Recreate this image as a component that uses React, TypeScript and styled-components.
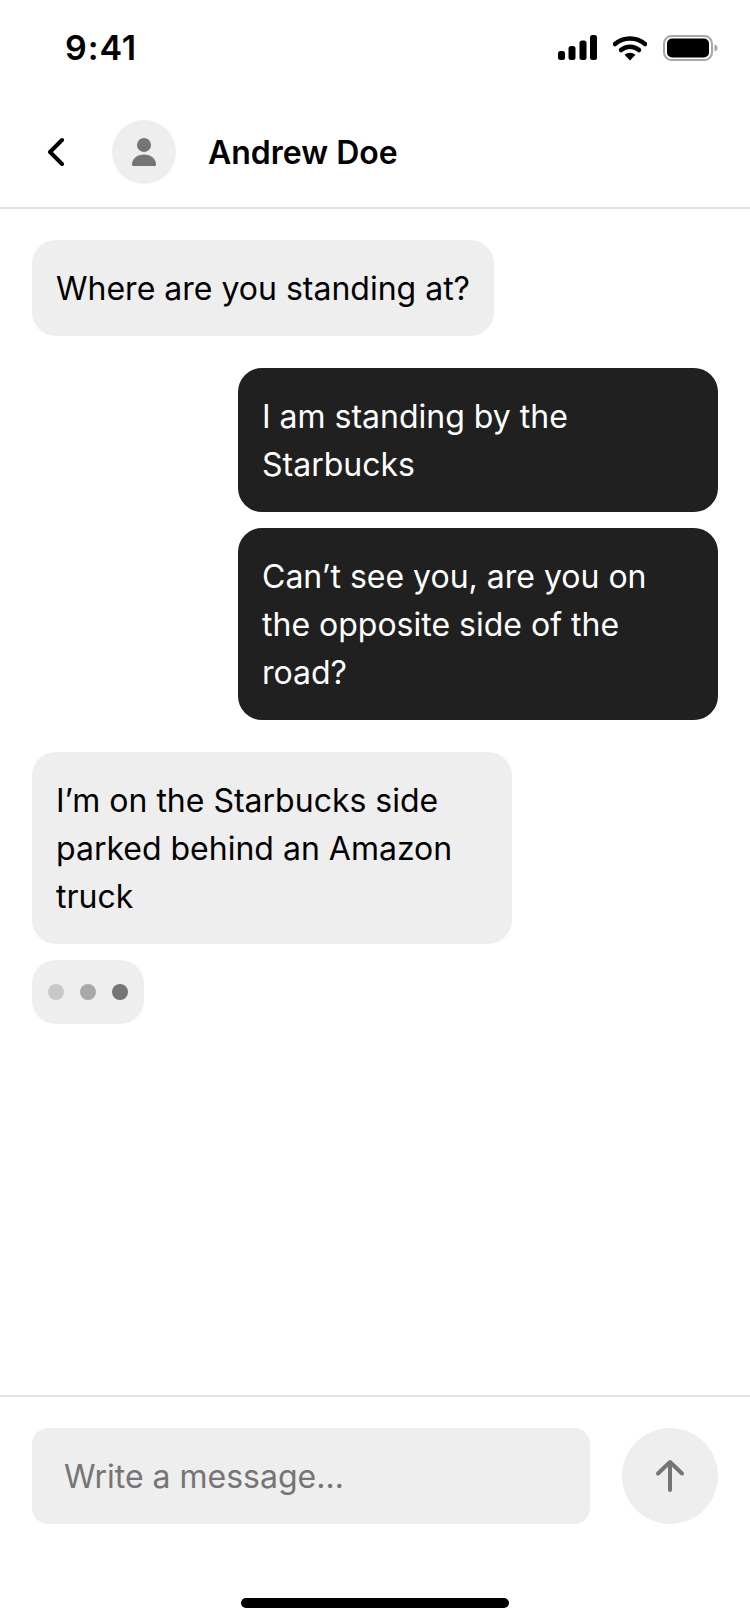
import React from 'react';
import styled, { createGlobalStyle } from 'styled-components';

const GlobalStyle = createGlobalStyle`
  html, body {
    margin: 0;
    padding: 0;
    background: #fff;
    font-family: Inter, "Liberation Sans", sans-serif;
    font-optical-sizing: none;
  }
  * { box-sizing: border-box; }
`;

const Screen = styled.div`
  width: 750px;
  height: 1624px;
  display: flex;
  flex-direction: column;
  background: #fff;
  color: #000;
`;

const StatusBar = styled.div`
  height: 96px;
  flex: none;
  display: flex;
  align-items: center;
  justify-content: space-between;
  padding: 0 32px 0 65px;
`;

const Time = styled.span`
  font-size: 34px;
  font-weight: 600;
  line-height: 40px;
  letter-spacing: 0.9px;
`;

const StatusIcons = styled.div`
  display: flex;
  align-items: center;
  gap: 16px;
`;

const Header = styled.header`
  height: 113px;
  flex: none;
  display: flex;
  align-items: center;
  padding: 0 32px 0 44px;
  border-bottom: 2px solid #e2e2e2;
`;

const BackButton = styled.div`
  width: 24px;
  height: 36px;
  margin-right: 44px;
  display: flex;
  align-items: center;
`;

const Avatar = styled.div`
  width: 64px;
  height: 64px;
  margin-right: 32px;
  border-radius: 50%;
  background: #eee;
  display: flex;
  align-items: center;
  justify-content: center;
`;

const Name = styled.div`
  font-size: 32px;
  font-weight: 600;
  line-height: 40px;
  padding-top: 2px;
`;

const Messages = styled.main`
  flex: 1;
  display: flex;
  flex-direction: column;
  gap: 32px;
  padding: 31px 32px 0;
`;

const Group = styled.div<{ $mine?: boolean }>`
  display: flex;
  flex-direction: column;
  gap: 16px;
  align-items: ${(p) => (p.$mine ? 'flex-end' : 'flex-start')};
`;

const Bubble = styled.div<{ $mine?: boolean; $wide?: boolean }>`
  width: ${(p) => (p.$mine || p.$wide ? '480px' : 'auto')};
  padding: 25px 24px 23px;
  border-radius: 24px;
  font-size: 32px;
  line-height: 48px;
  background: ${(p) => (p.$mine ? '#202020' : '#eee')};
  color: ${(p) => (p.$mine ? '#fff' : '#000')};
`;

const Typing = styled.div`
  width: 112px;
  height: 64px;
  padding: 0 16px;
  display: flex;
  align-items: center;
  gap: 16px;
  border-radius: 24px;
  background: #eee;
`;

const Dot = styled.span<{ $color: string }>`
  width: 16px;
  height: 16px;
  border-radius: 50%;
  background: ${(p) => p.$color};
`;

const Composer = styled.footer`
  flex: none;
  height: 229px;
  display: flex;
  align-items: flex-start;
  gap: 32px;
  padding: 31px 32px 0;
  border-top: 2px solid #e2e2e2;
  position: relative;
`;

const InputBox = styled.div`
  flex: 1;
  height: 96px;
  padding: 0 32px;
  display: flex;
  align-items: center;
  border-radius: 16px;
  background: #eee;
  font-size: 32px;
  color: #757575;
`;

const SendButton = styled.div`
  width: 96px;
  height: 96px;
  flex: none;
  border-radius: 50%;
  background: #eee;
  display: flex;
  align-items: center;
  justify-content: center;
`;

const HomeIndicator = styled.div`
  position: absolute;
  left: 241px;
  bottom: 16px;
  width: 268px;
  height: 10px;
  border-radius: 5px;
  background: #000;
`;

export default function App() {
  return (
    <Screen>
      <GlobalStyle />
      <StatusBar>
        <Time>9:41</Time>
        <StatusIcons>
          <svg width="39" height="26" viewBox="0 0 39 26" fill="#000">
            <rect x="0" y="16" width="7" height="9" rx="2.5" />
            <rect x="10.5" y="11" width="7" height="14" rx="2.5" />
            <rect x="21.5" y="5.5" width="7" height="19.5" rx="2.5" />
            <rect x="32" y="0" width="7" height="25" rx="2.5" />
          </svg>
          <svg width="34" height="26" viewBox="0 0 34 26" fill="none">
            <path d="M2 9C10.5 1.5 23.5 1.5 32 9" stroke="#000" strokeWidth="4.5" strokeLinecap="round" />
            <path d="M8 15C13 10.6 21 10.6 26 15" stroke="#000" strokeWidth="4.5" strokeLinecap="round" />
            <path d="M11.5 19.8C14.8 17 19.2 17 22.5 19.8L17 25.5Z" fill="#000" />
          </svg>
          <svg width="55" height="26" viewBox="0 0 55 26" fill="none">
            <rect x="1" y="1" width="48" height="24" rx="7.5" stroke="#a6a6a6" strokeWidth="2" />
            <rect x="4" y="3.5" width="42" height="19" rx="5" fill="#000" />
            <path d="M51.5 9.5C53.5 10 54.5 11.3 54.5 13C54.5 14.7 53.5 16 51.5 16.5Z" fill="#a6a6a6" />
          </svg>
        </StatusIcons>
      </StatusBar>
      <Header>
        <BackButton>
          <svg width="20" height="32" viewBox="0 0 20 32" fill="none">
            <path d="M18 4L6 16L18 28" stroke="#000" strokeWidth="4" strokeLinecap="round" strokeLinejoin="round" />
          </svg>
        </BackButton>
        <Avatar>
          <svg width="24" height="28" viewBox="0 0 24 28" fill="#757575">
            <circle cx="12" cy="7" r="7" />
            <path d="M0 26.5C0 20.5 5.5 16.5 12 16.5C18.5 16.5 24 20.5 24 26.5C24 27.5 23.5 28 22.5 28H1.5C0.5 28 0 27.5 0 26.5Z" />
          </svg>
        </Avatar>
        <Name>Andrew Doe</Name>
      </Header>
      <Messages>
        <Group>
          <Bubble>Where are you standing at?</Bubble>
        </Group>
        <Group $mine>
          <Bubble $mine>
            I am standing by the
            <br />
            Starbucks
          </Bubble>
          <Bubble $mine>
            Can’t see you, are you on
            <br />
            the opposite side of the
            <br />
            road?
          </Bubble>
        </Group>
        <Group>
          <Bubble $wide>
            I’m on the Starbucks side
            <br />
            parked behind an Amazon
            <br />
            truck
          </Bubble>
          <Typing>
            <Dot $color="#c8c8c8" />
            <Dot $color="#a8a8a8" />
            <Dot $color="#757575" />
          </Typing>
        </Group>
      </Messages>
      <Composer>
        <InputBox>Write a message…</InputBox>
        <SendButton>
          <svg width="32" height="36" viewBox="0 0 32 36" fill="none">
            <path d="M16 32V4M4 15.5L16 4L28 15.5" stroke="#757575" strokeWidth="4" strokeLinecap="round" strokeLinejoin="round" />
          </svg>
        </SendButton>
        <HomeIndicator />
      </Composer>
    </Screen>
  );
}
